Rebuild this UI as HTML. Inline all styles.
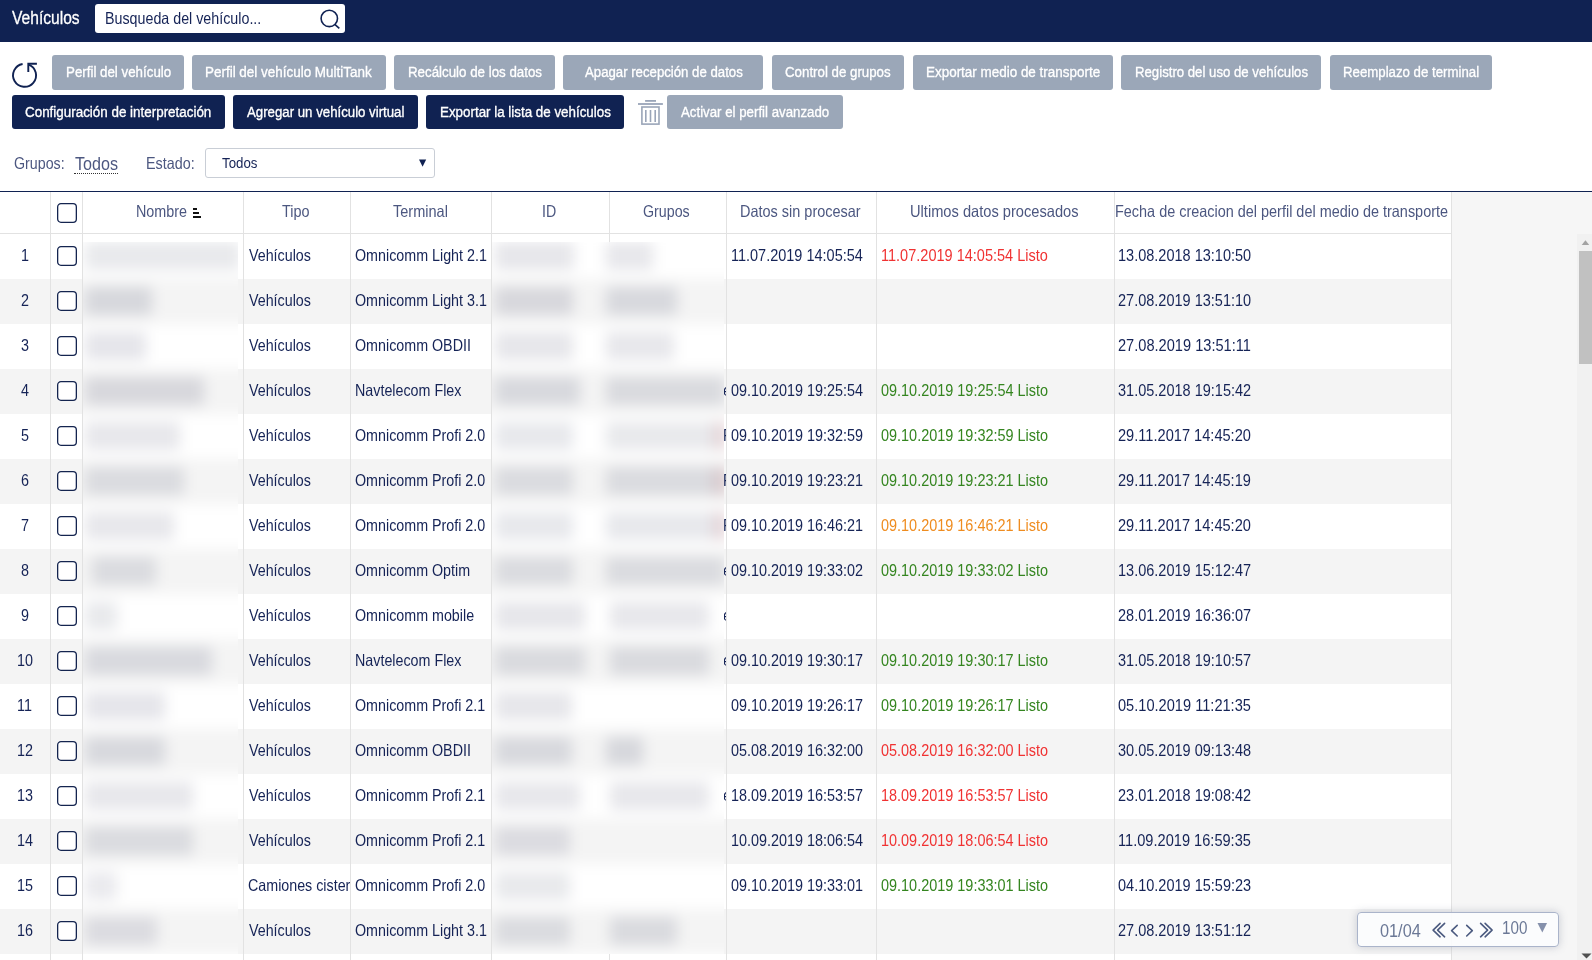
<!DOCTYPE html>
<html><head><meta charset="utf-8"><title>Vehículos</title>
<style>
html,body{margin:0;padding:0;}
body{width:1592px;height:960px;overflow:hidden;position:relative;background:#fff;font-family:"Liberation Sans",sans-serif;}
.t{position:absolute;white-space:pre;transform-origin:0 0;}
</style></head><body>
<div style="position:absolute;left:0px;top:0px;width:1592px;height:42px;background:#102252;"></div>
<div style="position:absolute;left:95px;top:4px;width:250px;height:29px;background:#ffffff;border-radius:3px"></div>
<svg style="position:absolute;left:0;top:0" width="360" height="41"><circle cx="329.3" cy="18.4" r="8.2" fill="none" stroke="#102252" stroke-width="1.6"/><line x1="334.8" y1="24.3" x2="339.3" y2="28.3" stroke="#102252" stroke-width="1.6"/></svg>
<svg style="position:absolute;left:0;top:50px" width="50" height="45" viewBox="0 50 50 45"><path d="M22.6 63.95 A11.5 11.5 0 1 0 28.7 64.55" fill="none" stroke="#102252" stroke-width="1.9"/><path d="M36.9 63.8 H28.3 V72.1" fill="none" stroke="#102252" stroke-width="1.9"/></svg>
<div style="position:absolute;left:52px;top:55px;width:132px;height:35px;background:#9ba7b8;border-radius:3px"></div>
<div style="position:absolute;left:192px;top:55px;width:194px;height:35px;background:#9ba7b8;border-radius:3px"></div>
<div style="position:absolute;left:394px;top:55px;width:161px;height:35px;background:#9ba7b8;border-radius:3px"></div>
<div style="position:absolute;left:563px;top:55px;width:200px;height:35px;background:#9ba7b8;border-radius:3px"></div>
<div style="position:absolute;left:772px;top:55px;width:132px;height:35px;background:#9ba7b8;border-radius:3px"></div>
<div style="position:absolute;left:913px;top:55px;width:200px;height:35px;background:#9ba7b8;border-radius:3px"></div>
<div style="position:absolute;left:1121px;top:55px;width:200px;height:35px;background:#9ba7b8;border-radius:3px"></div>
<div style="position:absolute;left:1330px;top:55px;width:162px;height:35px;background:#9ba7b8;border-radius:3px"></div>
<div style="position:absolute;left:12px;top:95px;width:213px;height:34px;background:#102252;border-radius:3px"></div>
<div style="position:absolute;left:233px;top:95px;width:185px;height:34px;background:#102252;border-radius:3px"></div>
<div style="position:absolute;left:426px;top:95px;width:198px;height:34px;background:#102252;border-radius:3px"></div>
<div style="position:absolute;left:667px;top:95px;width:176px;height:34px;background:#9ba7b8;border-radius:3px"></div>
<svg style="position:absolute;left:630px;top:95px" width="40" height="35" viewBox="630 95 40 35"><rect x="645.1" y="100" width="10.9" height="1.8" fill="#9aa5b8"/><rect x="638" y="103.1" width="24.9" height="1.8" fill="#9aa5b8"/><rect x="641.9" y="107" width="17.1" height="17.1" fill="none" stroke="#9aa5b8" stroke-width="1.6"/><rect x="645" y="110" width="1.6" height="12" fill="#9aa5b8"/><rect x="649.7" y="110" width="1.6" height="12" fill="#9aa5b8"/><rect x="654.4" y="110" width="1.6" height="12" fill="#9aa5b8"/></svg>
<div style="position:absolute;left:74px;top:172.5px;width:44px;height:0;border-top:1px dotted #333"></div>
<div style="position:absolute;left:205px;top:148px;width:230px;height:30px;background:#ffffff;box-sizing:border-box;border:1px solid #c9ced6;border-radius:3px"></div>
<svg style="position:absolute;left:415px;top:155px" width="15" height="15" viewBox="415 155 15 15"><path d="M419 159.6 H426.2 L422.6 166.8 Z" fill="#102252"/></svg>
<div style="position:absolute;left:0px;top:191px;width:1592px;height:1px;background:#102252;"></div>
<div style="position:absolute;left:1452px;top:192px;width:140px;height:768px;background:#f6f6f6;"></div>
<div style="position:absolute;left:1577px;top:234px;width:15px;height:726px;background:#f1f1f1;"></div>
<div style="position:absolute;left:1579px;top:251px;width:13px;height:113px;background:#c1c1c1;"></div>
<svg style="position:absolute;left:1577px;top:234px" width="15" height="726" viewBox="1577 234 15 726"><path d="M1581.7 245 H1589.2 L1585.45 240.3 Z" fill="#a3a3a3"/><path d="M1581.5 953.5 H1591.5 L1586.5 958.5 Z" fill="#505050"/></svg>
<div style="position:absolute;left:0px;top:234px;width:1451px;height:45px;background:#ffffff;"></div>
<div style="position:absolute;left:0px;top:279px;width:1451px;height:45px;background:#f4f4f4;"></div>
<div style="position:absolute;left:0px;top:324px;width:1451px;height:45px;background:#ffffff;"></div>
<div style="position:absolute;left:0px;top:369px;width:1451px;height:45px;background:#f4f4f4;"></div>
<div style="position:absolute;left:0px;top:414px;width:1451px;height:45px;background:#ffffff;"></div>
<div style="position:absolute;left:0px;top:459px;width:1451px;height:45px;background:#f4f4f4;"></div>
<div style="position:absolute;left:0px;top:504px;width:1451px;height:45px;background:#ffffff;"></div>
<div style="position:absolute;left:0px;top:549px;width:1451px;height:45px;background:#f4f4f4;"></div>
<div style="position:absolute;left:0px;top:594px;width:1451px;height:45px;background:#ffffff;"></div>
<div style="position:absolute;left:0px;top:639px;width:1451px;height:45px;background:#f4f4f4;"></div>
<div style="position:absolute;left:0px;top:684px;width:1451px;height:45px;background:#ffffff;"></div>
<div style="position:absolute;left:0px;top:729px;width:1451px;height:45px;background:#f4f4f4;"></div>
<div style="position:absolute;left:0px;top:774px;width:1451px;height:45px;background:#ffffff;"></div>
<div style="position:absolute;left:0px;top:819px;width:1451px;height:45px;background:#f4f4f4;"></div>
<div style="position:absolute;left:0px;top:864px;width:1451px;height:45px;background:#ffffff;"></div>
<div style="position:absolute;left:0px;top:909px;width:1451px;height:45px;background:#f4f4f4;"></div>
<div style="position:absolute;left:0px;top:954px;width:1451px;height:45px;background:#ffffff;"></div>
<div style="position:absolute;left:0px;top:233px;width:1451px;height:1px;background:#e2e2e2;"></div>
<div style="position:absolute;left:50px;top:192px;width:1px;height:768px;background:#e2e2e2;"></div>
<div style="position:absolute;left:82px;top:192px;width:1px;height:768px;background:#e2e2e2;"></div>
<div style="position:absolute;left:243px;top:192px;width:1px;height:768px;background:#e2e2e2;"></div>
<div style="position:absolute;left:350px;top:192px;width:1px;height:768px;background:#e2e2e2;"></div>
<div style="position:absolute;left:491px;top:192px;width:1px;height:768px;background:#e2e2e2;"></div>
<div style="position:absolute;left:609px;top:192px;width:1px;height:768px;background:#e2e2e2;"></div>
<div style="position:absolute;left:726px;top:192px;width:1px;height:768px;background:#e2e2e2;"></div>
<div style="position:absolute;left:876px;top:192px;width:1px;height:768px;background:#e2e2e2;"></div>
<div style="position:absolute;left:1114px;top:192px;width:1px;height:768px;background:#e2e2e2;"></div>
<div style="position:absolute;left:1451px;top:192px;width:1px;height:768px;background:#e2e2e2;"></div>
<div style="position:absolute;left:83px;top:242px;width:155px;height:712px;overflow:hidden"><div style="position:absolute;left:-20px;top:-20px;width:195px;height:752px;filter:blur(7px)"><div style="position:absolute;left:0;top:12px;width:195px;height:45px;background:#ffffff"></div><div style="position:absolute;left:0;top:57px;width:195px;height:45px;background:#f4f4f4"></div><div style="position:absolute;left:0;top:102px;width:195px;height:45px;background:#ffffff"></div><div style="position:absolute;left:0;top:147px;width:195px;height:45px;background:#f4f4f4"></div><div style="position:absolute;left:0;top:192px;width:195px;height:45px;background:#ffffff"></div><div style="position:absolute;left:0;top:237px;width:195px;height:45px;background:#f4f4f4"></div><div style="position:absolute;left:0;top:282px;width:195px;height:45px;background:#ffffff"></div><div style="position:absolute;left:0;top:327px;width:195px;height:45px;background:#f4f4f4"></div><div style="position:absolute;left:0;top:372px;width:195px;height:45px;background:#ffffff"></div><div style="position:absolute;left:0;top:417px;width:195px;height:45px;background:#f4f4f4"></div><div style="position:absolute;left:0;top:462px;width:195px;height:45px;background:#ffffff"></div><div style="position:absolute;left:0;top:507px;width:195px;height:45px;background:#f4f4f4"></div><div style="position:absolute;left:0;top:552px;width:195px;height:45px;background:#ffffff"></div><div style="position:absolute;left:0;top:597px;width:195px;height:45px;background:#f4f4f4"></div><div style="position:absolute;left:0;top:642px;width:195px;height:45px;background:#ffffff"></div><div style="position:absolute;left:0;top:687px;width:195px;height:45px;background:#f4f4f4"></div><div style="position:absolute;left:0;top:732px;width:195px;height:45px;background:#ffffff"></div><div style="position:absolute;left:22px;top:19.5px;width:155px;height:28px;background:rgba(40,45,80,0.105)"></div><div style="position:absolute;left:22px;top:64.5px;width:67px;height:28px;background:rgba(40,45,80,0.147)"></div><div style="position:absolute;left:22px;top:109.5px;width:61px;height:28px;background:rgba(40,45,80,0.1225)"></div><div style="position:absolute;left:22px;top:154.5px;width:119px;height:28px;background:rgba(40,45,80,0.14)"></div><div style="position:absolute;left:22px;top:199.5px;width:95px;height:28px;background:rgba(40,45,80,0.112)"></div><div style="position:absolute;left:22px;top:244.5px;width:99px;height:28px;background:rgba(40,45,80,0.126)"></div><div style="position:absolute;left:22px;top:289.5px;width:89px;height:28px;background:rgba(40,45,80,0.112)"></div><div style="position:absolute;left:29px;top:334.5px;width:64px;height:28px;background:rgba(40,45,80,0.126)"></div><div style="position:absolute;left:22px;top:379.5px;width:32px;height:28px;background:rgba(40,45,80,0.105)"></div><div style="position:absolute;left:22px;top:424.5px;width:127px;height:28px;background:rgba(40,45,80,0.133)"></div><div style="position:absolute;left:22px;top:469.5px;width:80px;height:28px;background:rgba(40,45,80,0.1225)"></div><div style="position:absolute;left:22px;top:514.5px;width:80px;height:28px;background:rgba(40,45,80,0.1365)"></div><div style="position:absolute;left:22px;top:559.5px;width:108px;height:28px;background:rgba(40,45,80,0.1155)"></div><div style="position:absolute;left:22px;top:604.5px;width:108px;height:28px;background:rgba(40,45,80,0.126)"></div><div style="position:absolute;left:22px;top:649.5px;width:32px;height:28px;background:rgba(40,45,80,0.098)"></div><div style="position:absolute;left:22px;top:694.5px;width:72px;height:28px;background:rgba(40,45,80,0.1225)"></div></div></div>
<div style="position:absolute;left:492px;top:242px;width:232px;height:712px;overflow:hidden"><div style="position:absolute;left:-20px;top:-20px;width:272px;height:752px;filter:blur(7px)"><div style="position:absolute;left:0;top:12px;width:272px;height:45px;background:#ffffff"></div><div style="position:absolute;left:0;top:57px;width:272px;height:45px;background:#f4f4f4"></div><div style="position:absolute;left:0;top:102px;width:272px;height:45px;background:#ffffff"></div><div style="position:absolute;left:0;top:147px;width:272px;height:45px;background:#f4f4f4"></div><div style="position:absolute;left:0;top:192px;width:272px;height:45px;background:#ffffff"></div><div style="position:absolute;left:0;top:237px;width:272px;height:45px;background:#f4f4f4"></div><div style="position:absolute;left:0;top:282px;width:272px;height:45px;background:#ffffff"></div><div style="position:absolute;left:0;top:327px;width:272px;height:45px;background:#f4f4f4"></div><div style="position:absolute;left:0;top:372px;width:272px;height:45px;background:#ffffff"></div><div style="position:absolute;left:0;top:417px;width:272px;height:45px;background:#f4f4f4"></div><div style="position:absolute;left:0;top:462px;width:272px;height:45px;background:#ffffff"></div><div style="position:absolute;left:0;top:507px;width:272px;height:45px;background:#f4f4f4"></div><div style="position:absolute;left:0;top:552px;width:272px;height:45px;background:#ffffff"></div><div style="position:absolute;left:0;top:597px;width:272px;height:45px;background:#f4f4f4"></div><div style="position:absolute;left:0;top:642px;width:272px;height:45px;background:#ffffff"></div><div style="position:absolute;left:0;top:687px;width:272px;height:45px;background:#f4f4f4"></div><div style="position:absolute;left:0;top:732px;width:272px;height:45px;background:#ffffff"></div><div style="position:absolute;left:23px;top:19.5px;width:79px;height:28px;background:rgba(40,45,80,0.119)"></div><div style="position:absolute;left:23px;top:64.5px;width:78px;height:28px;background:rgba(40,45,80,0.14)"></div><div style="position:absolute;left:23px;top:109.5px;width:78px;height:28px;background:rgba(40,45,80,0.119)"></div><div style="position:absolute;left:23px;top:154.5px;width:85px;height:28px;background:rgba(40,45,80,0.1365)"></div><div style="position:absolute;left:23px;top:199.5px;width:78px;height:28px;background:rgba(40,45,80,0.1085)"></div><div style="position:absolute;left:23px;top:244.5px;width:78px;height:28px;background:rgba(40,45,80,0.126)"></div><div style="position:absolute;left:23px;top:289.5px;width:78px;height:28px;background:rgba(40,45,80,0.1085)"></div><div style="position:absolute;left:23px;top:334.5px;width:78px;height:28px;background:rgba(40,45,80,0.126)"></div><div style="position:absolute;left:23px;top:379.5px;width:90px;height:28px;background:rgba(40,45,80,0.119)"></div><div style="position:absolute;left:23px;top:424.5px;width:90px;height:28px;background:rgba(40,45,80,0.1295)"></div><div style="position:absolute;left:23px;top:469.5px;width:77px;height:28px;background:rgba(40,45,80,0.119)"></div><div style="position:absolute;left:23px;top:514.5px;width:77px;height:28px;background:rgba(40,45,80,0.1365)"></div><div style="position:absolute;left:23px;top:559.5px;width:85px;height:28px;background:rgba(40,45,80,0.112)"></div><div style="position:absolute;left:23px;top:604.5px;width:75px;height:28px;background:rgba(40,45,80,0.1225)"></div><div style="position:absolute;left:23px;top:649.5px;width:75px;height:28px;background:rgba(40,45,80,0.105)"></div><div style="position:absolute;left:23px;top:694.5px;width:75px;height:28px;background:rgba(40,45,80,0.126)"></div><div style="position:absolute;left:134px;top:19.5px;width:47px;height:28px;background:rgba(40,45,80,0.112)"></div><div style="position:absolute;left:134px;top:64.5px;width:71px;height:28px;background:rgba(40,45,80,0.1365)"></div><div style="position:absolute;left:134px;top:109.5px;width:68px;height:28px;background:rgba(40,45,80,0.112)"></div><div style="position:absolute;left:134px;top:154.5px;width:119px;height:28px;background:rgba(40,45,80,0.1295)"></div><div style="position:absolute;left:134px;top:199.5px;width:119px;height:28px;background:rgba(40,45,80,0.105)"></div><div style="position:absolute;left:134px;top:244.5px;width:119px;height:28px;background:rgba(40,45,80,0.126)"></div><div style="position:absolute;left:134px;top:289.5px;width:119px;height:28px;background:rgba(40,45,80,0.1085)"></div><div style="position:absolute;left:134px;top:334.5px;width:119px;height:28px;background:rgba(40,45,80,0.126)"></div><div style="position:absolute;left:138px;top:379.5px;width:99px;height:28px;background:rgba(40,45,80,0.1155)"></div><div style="position:absolute;left:138px;top:424.5px;width:99px;height:28px;background:rgba(40,45,80,0.1295)"></div><div style="position:absolute;left:134px;top:514.5px;width:37px;height:28px;background:rgba(40,45,80,0.147)"></div><div style="position:absolute;left:138px;top:559.5px;width:99px;height:28px;background:rgba(40,45,80,0.112)"></div><div style="position:absolute;left:138px;top:694.5px;width:67px;height:28px;background:rgba(40,45,80,0.1295)"></div><div style="position:absolute;left:240px;top:199.5px;width:18px;height:28px;background:rgba(200,60,60,0.10)"></div><div style="position:absolute;left:240px;top:244.5px;width:18px;height:28px;background:rgba(200,60,60,0.10)"></div><div style="position:absolute;left:240px;top:289.5px;width:18px;height:28px;background:rgba(200,60,60,0.10)"></div></div></div>
<div style="position:absolute;left:193px;top:208px;width:4px;height:2px;background:#111"></div><div style="position:absolute;left:193px;top:212px;width:5.5px;height:2px;background:#111"></div><div style="position:absolute;left:193px;top:216px;width:8px;height:2px;background:#111"></div>
<svg style="position:absolute;left:57px;top:203px" width="20" height="20"><rect x="0.65" y="0.65" width="18.7" height="18.7" rx="3.3" fill="#fff" stroke="#14244f" stroke-width="1.3"/></svg>
<svg style="position:absolute;left:57px;top:246px" width="20" height="20"><rect x="0.65" y="0.65" width="18.7" height="18.7" rx="3.3" fill="#fff" stroke="#14244f" stroke-width="1.3"/></svg>
<svg style="position:absolute;left:57px;top:291px" width="20" height="20"><rect x="0.65" y="0.65" width="18.7" height="18.7" rx="3.3" fill="#fff" stroke="#14244f" stroke-width="1.3"/></svg>
<svg style="position:absolute;left:57px;top:336px" width="20" height="20"><rect x="0.65" y="0.65" width="18.7" height="18.7" rx="3.3" fill="#fff" stroke="#14244f" stroke-width="1.3"/></svg>
<svg style="position:absolute;left:57px;top:381px" width="20" height="20"><rect x="0.65" y="0.65" width="18.7" height="18.7" rx="3.3" fill="#fff" stroke="#14244f" stroke-width="1.3"/></svg>
<svg style="position:absolute;left:57px;top:426px" width="20" height="20"><rect x="0.65" y="0.65" width="18.7" height="18.7" rx="3.3" fill="#fff" stroke="#14244f" stroke-width="1.3"/></svg>
<svg style="position:absolute;left:57px;top:471px" width="20" height="20"><rect x="0.65" y="0.65" width="18.7" height="18.7" rx="3.3" fill="#fff" stroke="#14244f" stroke-width="1.3"/></svg>
<svg style="position:absolute;left:57px;top:516px" width="20" height="20"><rect x="0.65" y="0.65" width="18.7" height="18.7" rx="3.3" fill="#fff" stroke="#14244f" stroke-width="1.3"/></svg>
<svg style="position:absolute;left:57px;top:561px" width="20" height="20"><rect x="0.65" y="0.65" width="18.7" height="18.7" rx="3.3" fill="#fff" stroke="#14244f" stroke-width="1.3"/></svg>
<svg style="position:absolute;left:57px;top:606px" width="20" height="20"><rect x="0.65" y="0.65" width="18.7" height="18.7" rx="3.3" fill="#fff" stroke="#14244f" stroke-width="1.3"/></svg>
<svg style="position:absolute;left:57px;top:651px" width="20" height="20"><rect x="0.65" y="0.65" width="18.7" height="18.7" rx="3.3" fill="#fff" stroke="#14244f" stroke-width="1.3"/></svg>
<svg style="position:absolute;left:57px;top:696px" width="20" height="20"><rect x="0.65" y="0.65" width="18.7" height="18.7" rx="3.3" fill="#fff" stroke="#14244f" stroke-width="1.3"/></svg>
<svg style="position:absolute;left:57px;top:741px" width="20" height="20"><rect x="0.65" y="0.65" width="18.7" height="18.7" rx="3.3" fill="#fff" stroke="#14244f" stroke-width="1.3"/></svg>
<svg style="position:absolute;left:57px;top:786px" width="20" height="20"><rect x="0.65" y="0.65" width="18.7" height="18.7" rx="3.3" fill="#fff" stroke="#14244f" stroke-width="1.3"/></svg>
<svg style="position:absolute;left:57px;top:831px" width="20" height="20"><rect x="0.65" y="0.65" width="18.7" height="18.7" rx="3.3" fill="#fff" stroke="#14244f" stroke-width="1.3"/></svg>
<svg style="position:absolute;left:57px;top:876px" width="20" height="20"><rect x="0.65" y="0.65" width="18.7" height="18.7" rx="3.3" fill="#fff" stroke="#14244f" stroke-width="1.3"/></svg>
<svg style="position:absolute;left:57px;top:921px" width="20" height="20"><rect x="0.65" y="0.65" width="18.7" height="18.7" rx="3.3" fill="#fff" stroke="#14244f" stroke-width="1.3"/></svg>
<div style="position:absolute;left:1357px;top:912px;width:202px;height:35px;box-sizing:border-box;border:1px solid #aab4ca;border-radius:4px;background:rgba(252,253,254,0.88);box-shadow:0 0 9px rgba(80,90,120,0.28)"></div>
<svg style="position:absolute;left:1420px;top:915px" width="140" height="30" viewBox="1420 915 140 30"><g fill="none" stroke="#4c5b80" stroke-width="1.6" stroke-linecap="round" stroke-linejoin="round"><path d="M1440.1 923.4 L1433.1 930.1 L1440.1 936.8"/><path d="M1444.6 923.4 L1437.6 930.1 L1444.6 936.8"/><path d="M1457.2 925.4 L1451.6 930.6 L1457.2 936.0"/><path d="M1466.7 925.4 L1472.3 930.6 L1466.7 936.0"/><path d="M1480.6 923.4 L1487.6 930.1 L1480.6 936.8"/><path d="M1485.1 923.4 L1492.1 930.1 L1485.1 936.8"/></g><path d="M1537.5 923 H1547.1 L1542.3 932.6 Z" fill="#8590ab"/></svg>
<span class="t" style="left:11.70px;top:8.10px;font-size:19px;line-height:19px;font-weight:normal;color:#ffffff;transform:scaleX(0.8207);-webkit-text-stroke-width:0.3px;">Vehículos</span>
<span class="t" style="left:104.64px;top:10.20px;font-size:16.5px;line-height:16.5px;font-weight:normal;color:#152356;transform:scaleX(0.8648);">Busqueda del vehículo...</span>
<span class="t" style="left:65.54px;top:64.00px;font-size:15.5px;line-height:15.5px;font-weight:normal;color:#ffffff;transform:scaleX(0.8595);-webkit-text-stroke-width:0.35px;">Perfil del vehículo</span>
<span class="t" style="left:205.43px;top:64.00px;font-size:15.5px;line-height:15.5px;font-weight:normal;color:#ffffff;transform:scaleX(0.8675);-webkit-text-stroke-width:0.35px;">Perfil del vehículo MultiTank</span>
<span class="t" style="left:407.54px;top:64.00px;font-size:15.5px;line-height:15.5px;font-weight:normal;color:#ffffff;transform:scaleX(0.8594);-webkit-text-stroke-width:0.35px;">Recálculo de los datos</span>
<span class="t" style="left:584.90px;top:64.00px;font-size:15.5px;line-height:15.5px;font-weight:normal;color:#ffffff;transform:scaleX(0.8514);-webkit-text-stroke-width:0.35px;">Apagar recepción de datos</span>
<span class="t" style="left:785.04px;top:64.00px;font-size:15.5px;line-height:15.5px;font-weight:normal;color:#ffffff;transform:scaleX(0.8574);-webkit-text-stroke-width:0.35px;">Control de grupos</span>
<span class="t" style="left:925.83px;top:64.00px;font-size:15.5px;line-height:15.5px;font-weight:normal;color:#ffffff;transform:scaleX(0.8673);-webkit-text-stroke-width:0.35px;">Exportar medio de transporte</span>
<span class="t" style="left:1134.75px;top:64.00px;font-size:15.5px;line-height:15.5px;font-weight:normal;color:#ffffff;transform:scaleX(0.8510);-webkit-text-stroke-width:0.35px;">Registro del uso de vehículos</span>
<span class="t" style="left:1342.85px;top:64.00px;font-size:15.5px;line-height:15.5px;font-weight:normal;color:#ffffff;transform:scaleX(0.8538);-webkit-text-stroke-width:0.35px;">Reemplazo de terminal</span>
<span class="t" style="left:24.74px;top:104.00px;font-size:15.5px;line-height:15.5px;font-weight:normal;color:#ffffff;transform:scaleX(0.8650);-webkit-text-stroke-width:0.35px;">Configuración de interpretación</span>
<span class="t" style="left:246.70px;top:104.00px;font-size:15.5px;line-height:15.5px;font-weight:normal;color:#ffffff;transform:scaleX(0.8538);-webkit-text-stroke-width:0.35px;">Agregar un vehículo virtual</span>
<span class="t" style="left:439.54px;top:104.00px;font-size:15.5px;line-height:15.5px;font-weight:normal;color:#ffffff;transform:scaleX(0.8624);-webkit-text-stroke-width:0.35px;">Exportar la lista de vehículos</span>
<span class="t" style="left:680.50px;top:104.00px;font-size:15.5px;line-height:15.5px;font-weight:normal;color:#ffffff;transform:scaleX(0.8555);-webkit-text-stroke-width:0.35px;">Activar el perfil avanzado</span>
<span class="t" style="left:13.64px;top:154.90px;font-size:16.5px;line-height:16.5px;font-weight:normal;color:#4c5780;transform:scaleX(0.8625);">Grupos:</span>
<span class="t" style="left:74.80px;top:155.10px;font-size:18.5px;line-height:18.5px;font-weight:normal;color:#4c5780;transform:scaleX(0.8714);">Todos</span>
<span class="t" style="left:145.63px;top:154.70px;font-size:16.5px;line-height:16.5px;font-weight:normal;color:#4c5780;transform:scaleX(0.8704);">Estado:</span>
<span class="t" style="left:221.90px;top:154.90px;font-size:15.5px;line-height:15.5px;font-weight:normal;color:#152356;transform:scaleX(0.8561);">Todos</span>
<span class="t" style="left:135.83px;top:203.20px;font-size:16.5px;line-height:16.5px;font-weight:normal;color:#4c5780;transform:scaleX(0.8702);">Nombre</span>
<span class="t" style="left:282.40px;top:203.20px;font-size:16.5px;line-height:16.5px;font-weight:normal;color:#4c5780;transform:scaleX(0.8742);">Tipo</span>
<span class="t" style="left:392.70px;top:203.20px;font-size:16.5px;line-height:16.5px;font-weight:normal;color:#4c5780;transform:scaleX(0.8806);">Terminal</span>
<span class="t" style="left:541.94px;top:203.20px;font-size:16.5px;line-height:16.5px;font-weight:normal;color:#4c5780;transform:scaleX(0.8600);">ID</span>
<span class="t" style="left:643.24px;top:203.20px;font-size:16.5px;line-height:16.5px;font-weight:normal;color:#4c5780;transform:scaleX(0.8623);">Grupos</span>
<span class="t" style="left:739.82px;top:203.20px;font-size:16.5px;line-height:16.5px;font-weight:normal;color:#4c5780;transform:scaleX(0.8772);">Datos sin procesar</span>
<span class="t" style="left:909.71px;top:203.20px;font-size:16.5px;line-height:16.5px;font-weight:normal;color:#4c5780;transform:scaleX(0.8878);">Ultimos datos procesados</span>
<span class="t" style="left:1115.13px;top:203.20px;font-size:16.5px;line-height:16.5px;font-weight:normal;color:#4c5780;transform:scaleX(0.8749);">Fecha de creacion del perfil del medio de transporte</span>
<span class="t" style="left:20.65px;top:246.80px;font-size:16.5px;line-height:16.5px;font-weight:normal;color:#152356;transform:scaleX(0.8700);">1</span>
<div style="position:absolute;left:244px;top:234px;width:106px;height:45px;overflow:hidden"><span class="t" style="left:4.50px;top:12.80px;font-size:16.5px;line-height:16.5px;font-weight:normal;color:#152356;transform:scaleX(0.8650);">Vehículos</span></div>
<div style="position:absolute;left:351px;top:234px;width:140px;height:45px;overflow:hidden"><span class="t" style="left:3.63px;top:12.80px;font-size:16.5px;line-height:16.5px;font-weight:normal;color:#152356;transform:scaleX(0.8660);">Omnicomm Light 2.1</span></div>
<span class="t" style="left:730.72px;top:246.80px;font-size:16.5px;line-height:16.5px;font-weight:normal;color:#152356;transform:scaleX(0.8779);">11.07.2019 14:05:54</span>
<span class="t" style="left:880.62px;top:246.80px;font-size:16.5px;line-height:16.5px;font-weight:normal;color:#f03232;transform:scaleX(0.8803);">11.07.2019 14:05:54 Listo</span>
<span class="t" style="left:1118.02px;top:246.80px;font-size:16.5px;line-height:16.5px;font-weight:normal;color:#152356;transform:scaleX(0.8793);">13.08.2018 13:10:50</span>
<span class="t" style="left:20.65px;top:291.80px;font-size:16.5px;line-height:16.5px;font-weight:normal;color:#152356;transform:scaleX(0.8700);">2</span>
<div style="position:absolute;left:244px;top:279px;width:106px;height:45px;overflow:hidden"><span class="t" style="left:4.50px;top:12.80px;font-size:16.5px;line-height:16.5px;font-weight:normal;color:#152356;transform:scaleX(0.8650);">Vehículos</span></div>
<div style="position:absolute;left:351px;top:279px;width:140px;height:45px;overflow:hidden"><span class="t" style="left:3.63px;top:12.80px;font-size:16.5px;line-height:16.5px;font-weight:normal;color:#152356;transform:scaleX(0.8660);">Omnicomm Light 3.1</span></div>
<span class="t" style="left:1118.02px;top:291.80px;font-size:16.5px;line-height:16.5px;font-weight:normal;color:#152356;transform:scaleX(0.8793);">27.08.2019 13:51:10</span>
<span class="t" style="left:20.65px;top:336.80px;font-size:16.5px;line-height:16.5px;font-weight:normal;color:#152356;transform:scaleX(0.8700);">3</span>
<div style="position:absolute;left:244px;top:324px;width:106px;height:45px;overflow:hidden"><span class="t" style="left:4.50px;top:12.80px;font-size:16.5px;line-height:16.5px;font-weight:normal;color:#152356;transform:scaleX(0.8650);">Vehículos</span></div>
<div style="position:absolute;left:351px;top:324px;width:140px;height:45px;overflow:hidden"><span class="t" style="left:3.63px;top:12.80px;font-size:16.5px;line-height:16.5px;font-weight:normal;color:#152356;transform:scaleX(0.8660);">Omnicomm OBDII</span></div>
<span class="t" style="left:1118.01px;top:336.80px;font-size:16.5px;line-height:16.5px;font-weight:normal;color:#152356;transform:scaleX(0.8852);">27.08.2019 13:51:11</span>
<span class="t" style="left:21.09px;top:381.80px;font-size:16.5px;line-height:16.5px;font-weight:normal;color:#152356;transform:scaleX(0.8700);">4</span>
<div style="position:absolute;left:244px;top:369px;width:106px;height:45px;overflow:hidden"><span class="t" style="left:4.50px;top:12.80px;font-size:16.5px;line-height:16.5px;font-weight:normal;color:#152356;transform:scaleX(0.8650);">Vehículos</span></div>
<div style="position:absolute;left:351px;top:369px;width:140px;height:45px;overflow:hidden"><span class="t" style="left:3.63px;top:12.80px;font-size:16.5px;line-height:16.5px;font-weight:normal;color:#152356;transform:scaleX(0.8660);">Navtelecom Flex</span></div>
<span class="t" style="left:730.73px;top:381.80px;font-size:16.5px;line-height:16.5px;font-weight:normal;color:#152356;transform:scaleX(0.8720);">09.10.2019 19:25:54</span>
<span class="t" style="left:880.62px;top:381.80px;font-size:16.5px;line-height:16.5px;font-weight:normal;color:#34851f;transform:scaleX(0.8757);">09.10.2019 19:25:54 Listo</span>
<span class="t" style="left:1118.02px;top:381.80px;font-size:16.5px;line-height:16.5px;font-weight:normal;color:#152356;transform:scaleX(0.8793);">31.05.2018 19:15:42</span>
<div style="position:absolute;left:724px;top:369px;width:2px;height:45px;overflow:hidden"><span class="t" style="left:-0.67px;top:12.80px;font-size:16.5px;line-height:16.5px;font-weight:normal;color:#152356;transform:scaleX(0.8700);">e</span></div>
<span class="t" style="left:20.65px;top:426.80px;font-size:16.5px;line-height:16.5px;font-weight:normal;color:#152356;transform:scaleX(0.8700);">5</span>
<div style="position:absolute;left:244px;top:414px;width:106px;height:45px;overflow:hidden"><span class="t" style="left:4.50px;top:12.80px;font-size:16.5px;line-height:16.5px;font-weight:normal;color:#152356;transform:scaleX(0.8650);">Vehículos</span></div>
<div style="position:absolute;left:351px;top:414px;width:140px;height:45px;overflow:hidden"><span class="t" style="left:3.63px;top:12.80px;font-size:16.5px;line-height:16.5px;font-weight:normal;color:#152356;transform:scaleX(0.8660);">Omnicomm Profi 2.0</span></div>
<span class="t" style="left:730.73px;top:426.80px;font-size:16.5px;line-height:16.5px;font-weight:normal;color:#152356;transform:scaleX(0.8720);">09.10.2019 19:32:59</span>
<span class="t" style="left:880.62px;top:426.80px;font-size:16.5px;line-height:16.5px;font-weight:normal;color:#34851f;transform:scaleX(0.8757);">09.10.2019 19:32:59 Listo</span>
<span class="t" style="left:1118.01px;top:426.80px;font-size:16.5px;line-height:16.5px;font-weight:normal;color:#152356;transform:scaleX(0.8852);">29.11.2017 14:45:20</span>
<div style="position:absolute;left:724px;top:414px;width:2px;height:45px;overflow:hidden"><span class="t" style="left:-0.67px;top:12.80px;font-size:16.5px;line-height:16.5px;font-weight:normal;color:#152356;transform:scaleX(0.8700);">F</span></div>
<span class="t" style="left:20.65px;top:471.80px;font-size:16.5px;line-height:16.5px;font-weight:normal;color:#152356;transform:scaleX(0.8700);">6</span>
<div style="position:absolute;left:244px;top:459px;width:106px;height:45px;overflow:hidden"><span class="t" style="left:4.50px;top:12.80px;font-size:16.5px;line-height:16.5px;font-weight:normal;color:#152356;transform:scaleX(0.8650);">Vehículos</span></div>
<div style="position:absolute;left:351px;top:459px;width:140px;height:45px;overflow:hidden"><span class="t" style="left:3.63px;top:12.80px;font-size:16.5px;line-height:16.5px;font-weight:normal;color:#152356;transform:scaleX(0.8660);">Omnicomm Profi 2.0</span></div>
<span class="t" style="left:730.73px;top:471.80px;font-size:16.5px;line-height:16.5px;font-weight:normal;color:#152356;transform:scaleX(0.8720);">09.10.2019 19:23:21</span>
<span class="t" style="left:880.62px;top:471.80px;font-size:16.5px;line-height:16.5px;font-weight:normal;color:#34851f;transform:scaleX(0.8757);">09.10.2019 19:23:21 Listo</span>
<span class="t" style="left:1118.01px;top:471.80px;font-size:16.5px;line-height:16.5px;font-weight:normal;color:#152356;transform:scaleX(0.8852);">29.11.2017 14:45:19</span>
<div style="position:absolute;left:724px;top:459px;width:2px;height:45px;overflow:hidden"><span class="t" style="left:-0.67px;top:12.80px;font-size:16.5px;line-height:16.5px;font-weight:normal;color:#152356;transform:scaleX(0.8700);">F</span></div>
<span class="t" style="left:20.65px;top:516.80px;font-size:16.5px;line-height:16.5px;font-weight:normal;color:#152356;transform:scaleX(0.8700);">7</span>
<div style="position:absolute;left:244px;top:504px;width:106px;height:45px;overflow:hidden"><span class="t" style="left:4.50px;top:12.80px;font-size:16.5px;line-height:16.5px;font-weight:normal;color:#152356;transform:scaleX(0.8650);">Vehículos</span></div>
<div style="position:absolute;left:351px;top:504px;width:140px;height:45px;overflow:hidden"><span class="t" style="left:3.63px;top:12.80px;font-size:16.5px;line-height:16.5px;font-weight:normal;color:#152356;transform:scaleX(0.8660);">Omnicomm Profi 2.0</span></div>
<span class="t" style="left:730.73px;top:516.80px;font-size:16.5px;line-height:16.5px;font-weight:normal;color:#152356;transform:scaleX(0.8720);">09.10.2019 16:46:21</span>
<span class="t" style="left:880.62px;top:516.80px;font-size:16.5px;line-height:16.5px;font-weight:normal;color:#ef8c1f;transform:scaleX(0.8757);">09.10.2019 16:46:21 Listo</span>
<span class="t" style="left:1118.01px;top:516.80px;font-size:16.5px;line-height:16.5px;font-weight:normal;color:#152356;transform:scaleX(0.8852);">29.11.2017 14:45:20</span>
<div style="position:absolute;left:724px;top:504px;width:2px;height:45px;overflow:hidden"><span class="t" style="left:-0.67px;top:12.80px;font-size:16.5px;line-height:16.5px;font-weight:normal;color:#152356;transform:scaleX(0.8700);">F</span></div>
<span class="t" style="left:20.65px;top:561.80px;font-size:16.5px;line-height:16.5px;font-weight:normal;color:#152356;transform:scaleX(0.8700);">8</span>
<div style="position:absolute;left:244px;top:549px;width:106px;height:45px;overflow:hidden"><span class="t" style="left:4.50px;top:12.80px;font-size:16.5px;line-height:16.5px;font-weight:normal;color:#152356;transform:scaleX(0.8650);">Vehículos</span></div>
<div style="position:absolute;left:351px;top:549px;width:140px;height:45px;overflow:hidden"><span class="t" style="left:3.63px;top:12.80px;font-size:16.5px;line-height:16.5px;font-weight:normal;color:#152356;transform:scaleX(0.8660);">Omnicomm Optim</span></div>
<span class="t" style="left:730.73px;top:561.80px;font-size:16.5px;line-height:16.5px;font-weight:normal;color:#152356;transform:scaleX(0.8720);">09.10.2019 19:33:02</span>
<span class="t" style="left:880.62px;top:561.80px;font-size:16.5px;line-height:16.5px;font-weight:normal;color:#34851f;transform:scaleX(0.8757);">09.10.2019 19:33:02 Listo</span>
<span class="t" style="left:1118.02px;top:561.80px;font-size:16.5px;line-height:16.5px;font-weight:normal;color:#152356;transform:scaleX(0.8793);">13.06.2019 15:12:47</span>
<div style="position:absolute;left:724px;top:549px;width:2px;height:45px;overflow:hidden"><span class="t" style="left:-0.67px;top:12.80px;font-size:16.5px;line-height:16.5px;font-weight:normal;color:#152356;transform:scaleX(0.8700);">e</span></div>
<span class="t" style="left:20.65px;top:606.80px;font-size:16.5px;line-height:16.5px;font-weight:normal;color:#152356;transform:scaleX(0.8700);">9</span>
<div style="position:absolute;left:244px;top:594px;width:106px;height:45px;overflow:hidden"><span class="t" style="left:4.50px;top:12.80px;font-size:16.5px;line-height:16.5px;font-weight:normal;color:#152356;transform:scaleX(0.8650);">Vehículos</span></div>
<div style="position:absolute;left:351px;top:594px;width:140px;height:45px;overflow:hidden"><span class="t" style="left:3.63px;top:12.80px;font-size:16.5px;line-height:16.5px;font-weight:normal;color:#152356;transform:scaleX(0.8660);">Omnicomm mobile</span></div>
<span class="t" style="left:1118.02px;top:606.80px;font-size:16.5px;line-height:16.5px;font-weight:normal;color:#152356;transform:scaleX(0.8793);">28.01.2019 16:36:07</span>
<div style="position:absolute;left:724px;top:594px;width:2px;height:45px;overflow:hidden"><span class="t" style="left:-0.67px;top:12.80px;font-size:16.5px;line-height:16.5px;font-weight:normal;color:#152356;transform:scaleX(0.8700);">e</span></div>
<span class="t" style="left:16.73px;top:651.80px;font-size:16.5px;line-height:16.5px;font-weight:normal;color:#152356;transform:scaleX(0.8700);">10</span>
<div style="position:absolute;left:244px;top:639px;width:106px;height:45px;overflow:hidden"><span class="t" style="left:4.50px;top:12.80px;font-size:16.5px;line-height:16.5px;font-weight:normal;color:#152356;transform:scaleX(0.8650);">Vehículos</span></div>
<div style="position:absolute;left:351px;top:639px;width:140px;height:45px;overflow:hidden"><span class="t" style="left:3.63px;top:12.80px;font-size:16.5px;line-height:16.5px;font-weight:normal;color:#152356;transform:scaleX(0.8660);">Navtelecom Flex</span></div>
<span class="t" style="left:730.73px;top:651.80px;font-size:16.5px;line-height:16.5px;font-weight:normal;color:#152356;transform:scaleX(0.8720);">09.10.2019 19:30:17</span>
<span class="t" style="left:880.62px;top:651.80px;font-size:16.5px;line-height:16.5px;font-weight:normal;color:#34851f;transform:scaleX(0.8757);">09.10.2019 19:30:17 Listo</span>
<span class="t" style="left:1118.02px;top:651.80px;font-size:16.5px;line-height:16.5px;font-weight:normal;color:#152356;transform:scaleX(0.8793);">31.05.2018 19:10:57</span>
<div style="position:absolute;left:724px;top:639px;width:2px;height:45px;overflow:hidden"><span class="t" style="left:-0.67px;top:12.80px;font-size:16.5px;line-height:16.5px;font-weight:normal;color:#152356;transform:scaleX(0.8700);">e</span></div>
<span class="t" style="left:17.17px;top:696.80px;font-size:16.5px;line-height:16.5px;font-weight:normal;color:#152356;transform:scaleX(0.8700);">11</span>
<div style="position:absolute;left:244px;top:684px;width:106px;height:45px;overflow:hidden"><span class="t" style="left:4.50px;top:12.80px;font-size:16.5px;line-height:16.5px;font-weight:normal;color:#152356;transform:scaleX(0.8650);">Vehículos</span></div>
<div style="position:absolute;left:351px;top:684px;width:140px;height:45px;overflow:hidden"><span class="t" style="left:3.63px;top:12.80px;font-size:16.5px;line-height:16.5px;font-weight:normal;color:#152356;transform:scaleX(0.8660);">Omnicomm Profi 2.1</span></div>
<span class="t" style="left:730.73px;top:696.80px;font-size:16.5px;line-height:16.5px;font-weight:normal;color:#152356;transform:scaleX(0.8720);">09.10.2019 19:26:17</span>
<span class="t" style="left:880.62px;top:696.80px;font-size:16.5px;line-height:16.5px;font-weight:normal;color:#34851f;transform:scaleX(0.8757);">09.10.2019 19:26:17 Listo</span>
<span class="t" style="left:1118.01px;top:696.80px;font-size:16.5px;line-height:16.5px;font-weight:normal;color:#152356;transform:scaleX(0.8852);">05.10.2019 11:21:35</span>
<span class="t" style="left:16.73px;top:741.80px;font-size:16.5px;line-height:16.5px;font-weight:normal;color:#152356;transform:scaleX(0.8700);">12</span>
<div style="position:absolute;left:244px;top:729px;width:106px;height:45px;overflow:hidden"><span class="t" style="left:4.50px;top:12.80px;font-size:16.5px;line-height:16.5px;font-weight:normal;color:#152356;transform:scaleX(0.8650);">Vehículos</span></div>
<div style="position:absolute;left:351px;top:729px;width:140px;height:45px;overflow:hidden"><span class="t" style="left:3.63px;top:12.80px;font-size:16.5px;line-height:16.5px;font-weight:normal;color:#152356;transform:scaleX(0.8660);">Omnicomm OBDII</span></div>
<span class="t" style="left:730.73px;top:741.80px;font-size:16.5px;line-height:16.5px;font-weight:normal;color:#152356;transform:scaleX(0.8720);">05.08.2019 16:32:00</span>
<span class="t" style="left:880.62px;top:741.80px;font-size:16.5px;line-height:16.5px;font-weight:normal;color:#f03232;transform:scaleX(0.8757);">05.08.2019 16:32:00 Listo</span>
<span class="t" style="left:1118.02px;top:741.80px;font-size:16.5px;line-height:16.5px;font-weight:normal;color:#152356;transform:scaleX(0.8793);">30.05.2019 09:13:48</span>
<span class="t" style="left:16.73px;top:786.80px;font-size:16.5px;line-height:16.5px;font-weight:normal;color:#152356;transform:scaleX(0.8700);">13</span>
<div style="position:absolute;left:244px;top:774px;width:106px;height:45px;overflow:hidden"><span class="t" style="left:4.50px;top:12.80px;font-size:16.5px;line-height:16.5px;font-weight:normal;color:#152356;transform:scaleX(0.8650);">Vehículos</span></div>
<div style="position:absolute;left:351px;top:774px;width:140px;height:45px;overflow:hidden"><span class="t" style="left:3.63px;top:12.80px;font-size:16.5px;line-height:16.5px;font-weight:normal;color:#152356;transform:scaleX(0.8660);">Omnicomm Profi 2.1</span></div>
<span class="t" style="left:730.73px;top:786.80px;font-size:16.5px;line-height:16.5px;font-weight:normal;color:#152356;transform:scaleX(0.8720);">18.09.2019 16:53:57</span>
<span class="t" style="left:880.62px;top:786.80px;font-size:16.5px;line-height:16.5px;font-weight:normal;color:#f03232;transform:scaleX(0.8757);">18.09.2019 16:53:57 Listo</span>
<span class="t" style="left:1118.02px;top:786.80px;font-size:16.5px;line-height:16.5px;font-weight:normal;color:#152356;transform:scaleX(0.8793);">23.01.2018 19:08:42</span>
<div style="position:absolute;left:724px;top:774px;width:2px;height:45px;overflow:hidden"><span class="t" style="left:-0.67px;top:12.80px;font-size:16.5px;line-height:16.5px;font-weight:normal;color:#152356;transform:scaleX(0.8700);">e</span></div>
<span class="t" style="left:16.73px;top:831.80px;font-size:16.5px;line-height:16.5px;font-weight:normal;color:#152356;transform:scaleX(0.8700);">14</span>
<div style="position:absolute;left:244px;top:819px;width:106px;height:45px;overflow:hidden"><span class="t" style="left:4.50px;top:12.80px;font-size:16.5px;line-height:16.5px;font-weight:normal;color:#152356;transform:scaleX(0.8650);">Vehículos</span></div>
<div style="position:absolute;left:351px;top:819px;width:140px;height:45px;overflow:hidden"><span class="t" style="left:3.63px;top:12.80px;font-size:16.5px;line-height:16.5px;font-weight:normal;color:#152356;transform:scaleX(0.8660);">Omnicomm Profi 2.1</span></div>
<span class="t" style="left:730.73px;top:831.80px;font-size:16.5px;line-height:16.5px;font-weight:normal;color:#152356;transform:scaleX(0.8720);">10.09.2019 18:06:54</span>
<span class="t" style="left:880.62px;top:831.80px;font-size:16.5px;line-height:16.5px;font-weight:normal;color:#f03232;transform:scaleX(0.8757);">10.09.2019 18:06:54 Listo</span>
<span class="t" style="left:1118.01px;top:831.80px;font-size:16.5px;line-height:16.5px;font-weight:normal;color:#152356;transform:scaleX(0.8852);">11.09.2019 16:59:35</span>
<span class="t" style="left:16.73px;top:876.80px;font-size:16.5px;line-height:16.5px;font-weight:normal;color:#152356;transform:scaleX(0.8700);">15</span>
<div style="position:absolute;left:244px;top:864px;width:106px;height:45px;overflow:hidden"><span class="t" style="left:3.63px;top:12.80px;font-size:16.5px;line-height:16.5px;font-weight:normal;color:#152356;transform:scaleX(0.8650);">Camiones cisternas</span></div>
<div style="position:absolute;left:351px;top:864px;width:140px;height:45px;overflow:hidden"><span class="t" style="left:3.63px;top:12.80px;font-size:16.5px;line-height:16.5px;font-weight:normal;color:#152356;transform:scaleX(0.8660);">Omnicomm Profi 2.0</span></div>
<span class="t" style="left:730.73px;top:876.80px;font-size:16.5px;line-height:16.5px;font-weight:normal;color:#152356;transform:scaleX(0.8720);">09.10.2019 19:33:01</span>
<span class="t" style="left:880.62px;top:876.80px;font-size:16.5px;line-height:16.5px;font-weight:normal;color:#34851f;transform:scaleX(0.8757);">09.10.2019 19:33:01 Listo</span>
<span class="t" style="left:1118.02px;top:876.80px;font-size:16.5px;line-height:16.5px;font-weight:normal;color:#152356;transform:scaleX(0.8793);">04.10.2019 15:59:23</span>
<span class="t" style="left:16.73px;top:921.80px;font-size:16.5px;line-height:16.5px;font-weight:normal;color:#152356;transform:scaleX(0.8700);">16</span>
<div style="position:absolute;left:244px;top:909px;width:106px;height:45px;overflow:hidden"><span class="t" style="left:4.50px;top:12.80px;font-size:16.5px;line-height:16.5px;font-weight:normal;color:#152356;transform:scaleX(0.8650);">Vehículos</span></div>
<div style="position:absolute;left:351px;top:909px;width:140px;height:45px;overflow:hidden"><span class="t" style="left:3.63px;top:12.80px;font-size:16.5px;line-height:16.5px;font-weight:normal;color:#152356;transform:scaleX(0.8660);">Omnicomm Light 3.1</span></div>
<span class="t" style="left:1118.02px;top:921.80px;font-size:16.5px;line-height:16.5px;font-weight:normal;color:#152356;transform:scaleX(0.8793);">27.08.2019 13:51:12</span>
<span class="t" style="left:1379.80px;top:921.80px;font-size:18px;line-height:18px;font-weight:normal;color:#6b7896;transform:scaleX(0.9045);">01/04</span>
<span class="t" style="left:1501.76px;top:918.90px;font-size:18px;line-height:18px;font-weight:normal;color:#6b7896;transform:scaleX(0.8448);">100</span>
</body></html>
